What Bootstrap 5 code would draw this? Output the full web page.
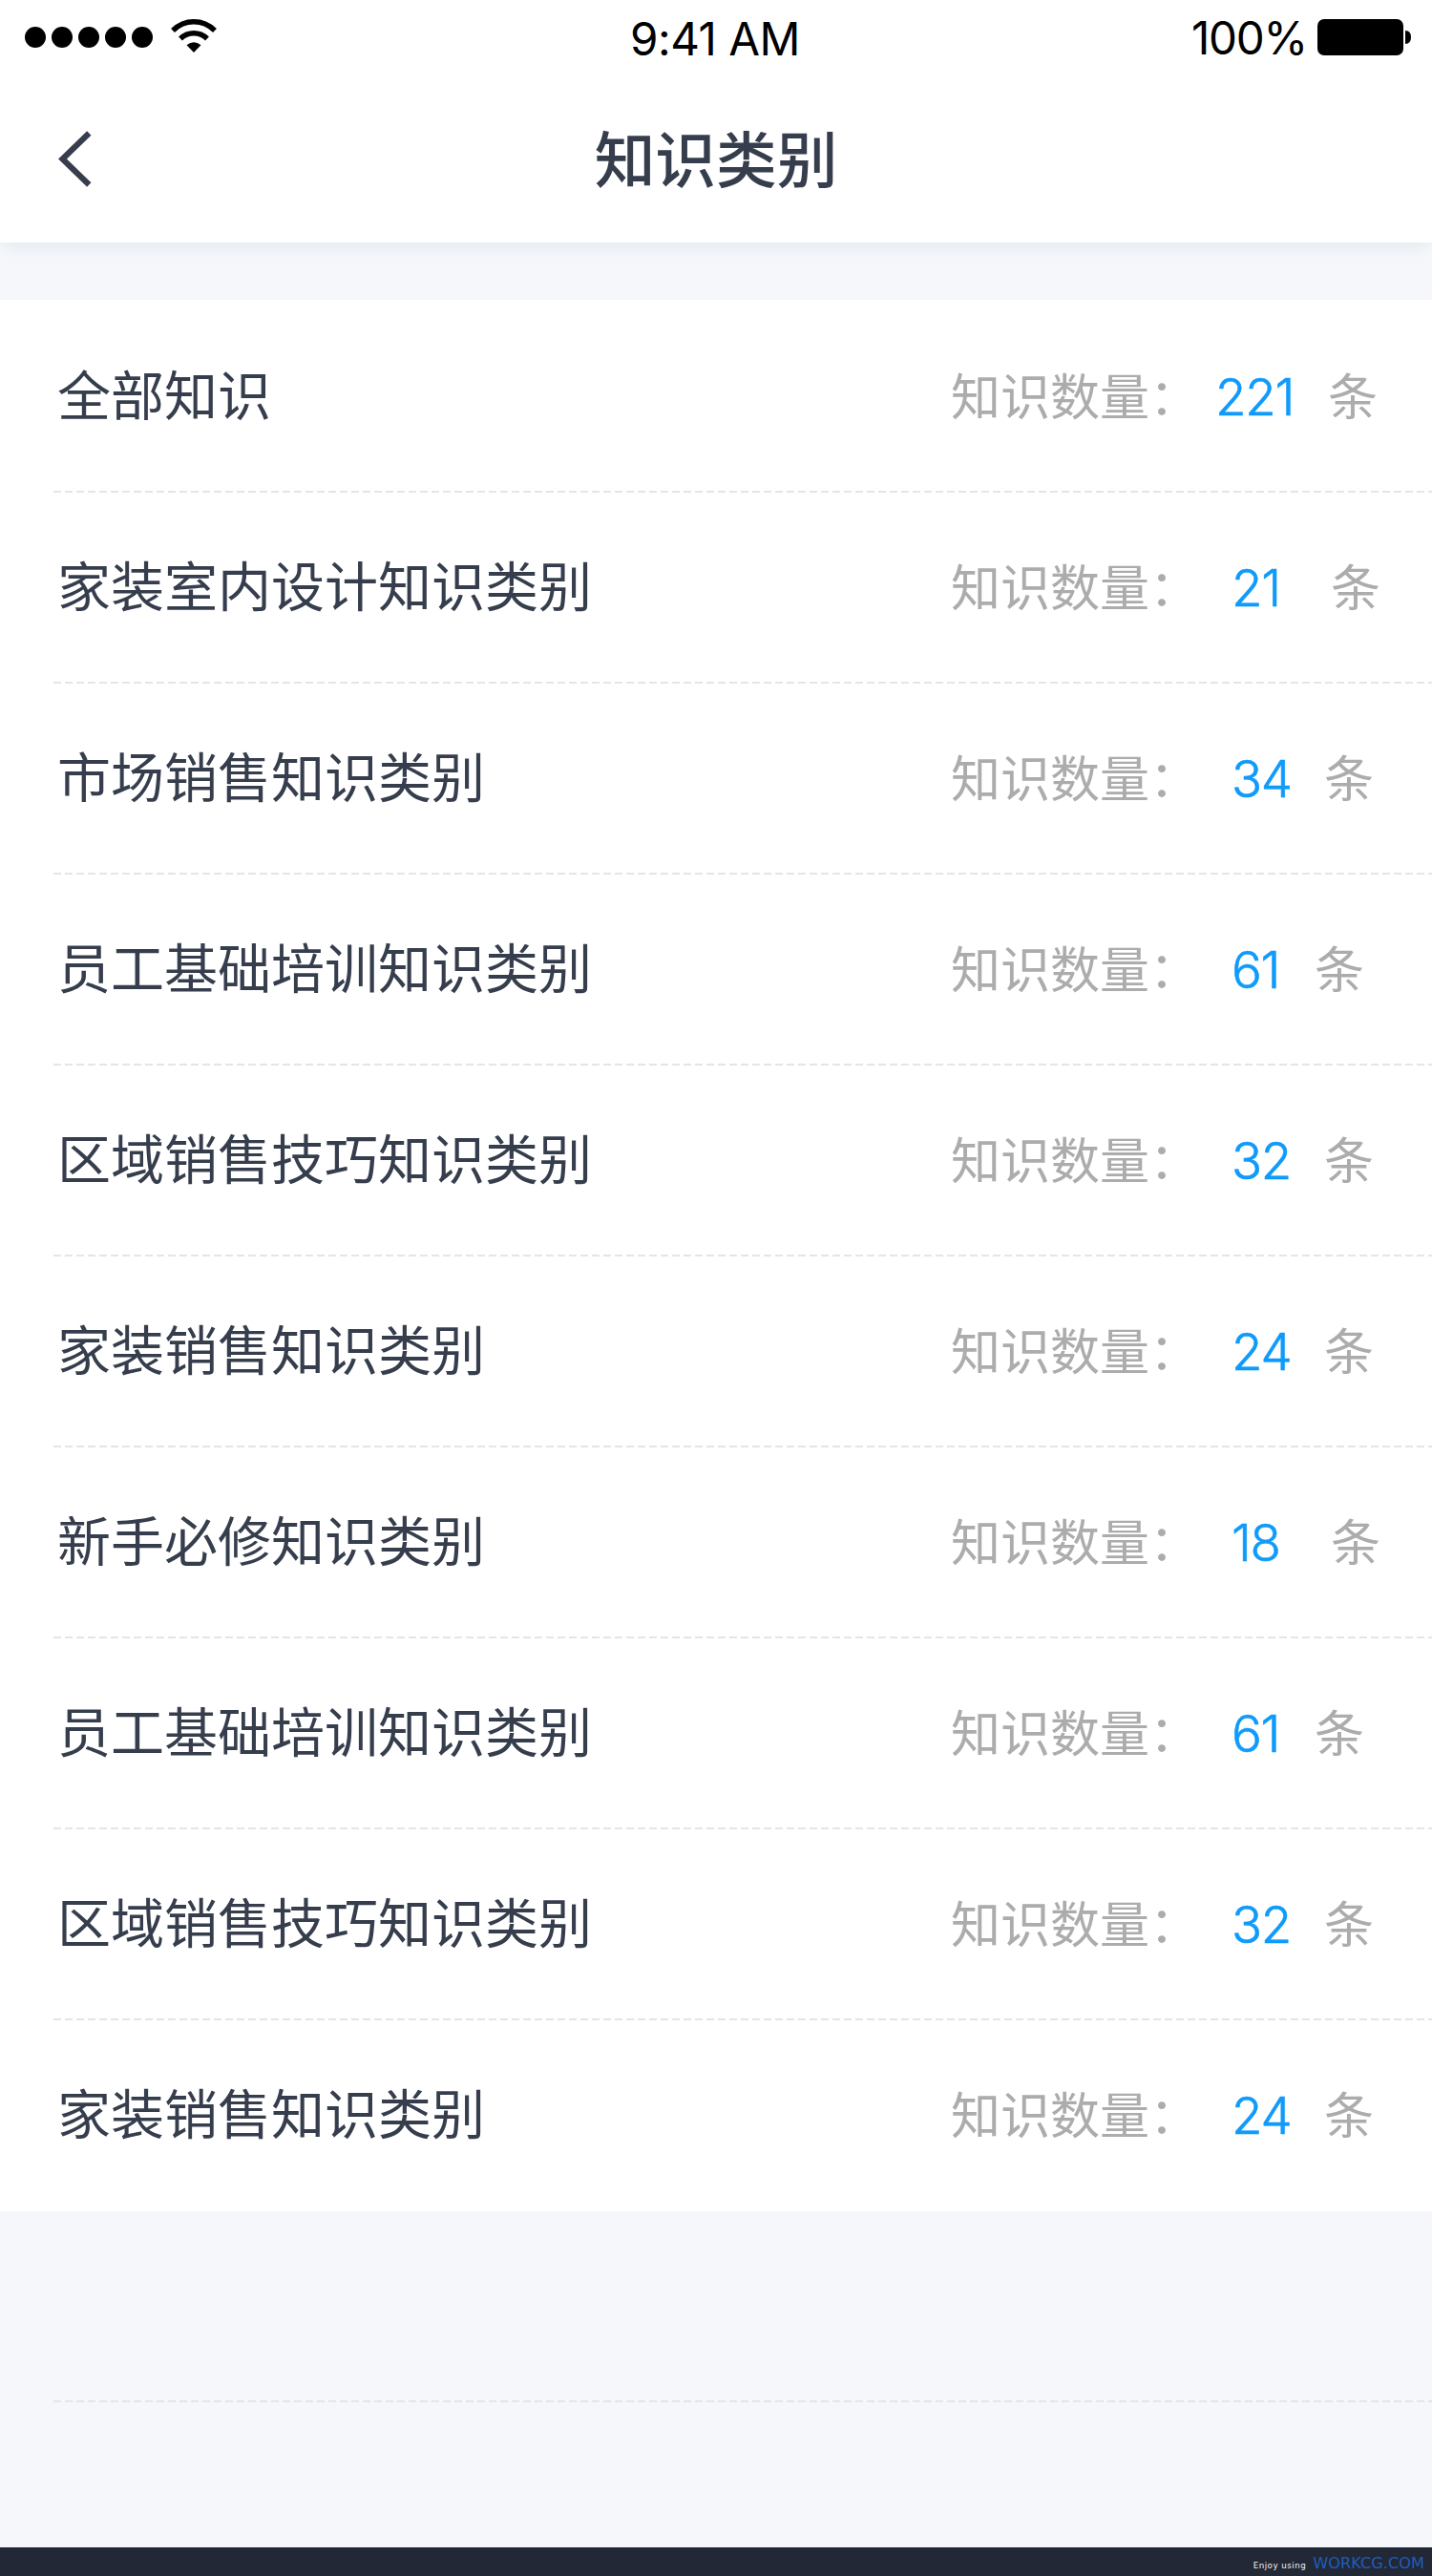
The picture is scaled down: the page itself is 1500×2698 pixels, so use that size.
<!DOCTYPE html>
<html lang="zh-CN">
<head>
<meta charset="utf-8">
<meta name="viewport" content="width=device-width, initial-scale=1">
<title>知识类别</title>
<link href="https://cdn.jsdelivr.net/npm/bootstrap@5.3.0/dist/css/bootstrap.min.css" rel="stylesheet">
<style>
  body { background: #f5f7fb; color: #363e4d; font-family: Inter, "Noto Sans CJK SC", sans-serif; }
  .screen { width: 1500px; height: 2698px; overflow: hidden; }
  .app-header { height: 254px; box-shadow: 0 8px 16px -4px rgba(160, 185, 195, .22); }
  .status-bar { height: 78px; color: #000; font-size: 47.5px; line-height: 78px; }
  .status-bar > div { flex: 1 1 0; }
  .clock { letter-spacing: -.5px; padding-top: 2px; padding-right: 2px; }
  .charge { letter-spacing: -1.2px; padding-right: 11px; padding-top: 1px; }
  .title-bar { height: 176px; }
  .title-bar > div { flex: 1 1 0; }
  .title-bar h1 { font: 500 63.7px/90px "Noto Sans CJK SC", sans-serif; padding-bottom: 7px; }
  .back-link { padding-left: 56px; }
  .category-list { margin-top: 60px; padding-top: 2px; }
  .category-row { height: 200px; margin-left: 56px; padding-left: 4px; }
  .dashed-line::after { content: ""; position: absolute; left: 0; right: 0; bottom: 0; height: 2px;
    background: repeating-linear-gradient(90deg, #e5e5e5 0 8px, transparent 8px 12px); }
  .category-name { font: 400 56px/80px "Noto Sans CJK SC", sans-serif; width: 936px; padding-bottom: 10px; }
  .count-label, .count-unit { font: 400 52px/76px "Noto Sans CJK SC", sans-serif; color: #acacac; padding-bottom: 6px; }
  .count-label { width: 294px; }
  .count-value { font-size: 53px; font-weight: 300; line-height: 76px; color: #109bfb; -webkit-text-stroke: .6px #109bfb; letter-spacing: -1.3px; width: 97px; }
  .count-value.wide { margin-left: -17px; width: 118px; }
  .count-value.roomy { width: 104px; }
  .count-value.tight { width: 87px; }
  .page-footer { height: 30px; background: #222835; font-family: "DejaVu Sans", sans-serif; padding-right: 8px; }
  .credit { font-size: 8.7px; line-height: 12px; color: #f4f5f7; letter-spacing: .5px; margin-right: 7px; padding-top: 8px; }
  .brand { font-size: 16.2px; line-height: 30px; color: #1f5cbc; padding-top: 3px; }
</style>
</head>
<body>
<main class="screen d-flex flex-column">
  <header class="app-header bg-white position-relative">
    <div class="status-bar d-flex">
      <div class="d-flex">
        <svg width="240" height="78" viewBox="0 0 240 78" aria-hidden="true">
          <circle cx="37" cy="39" r="11"/><circle cx="65" cy="39" r="11"/><circle cx="93" cy="39" r="11"/><circle cx="121" cy="39" r="11"/><circle cx="149" cy="39" r="11"/>
          <g fill="none" stroke="#000" stroke-width="5.6"><path d="M181 32Q190.500 22.800 203 22.800T225 32"/><path d="M189 40.500Q195 34.800 203 34.800T217 40.500"/></g>
          <path d="M195.500 47.300Q203 41 210.500 47.300L203 55Z"/>
        </svg>
      </div>
      <div class="clock text-center">9:41 AM</div>
      <div class="d-flex justify-content-end">
        <span class="charge">100%</span>
        <svg width="120" height="78" viewBox="0 0 120 78" aria-hidden="true"><rect y="20" width="90" height="38" rx="7"/><path d="M92 32Q98 32 98 39T92 46Z"/></svg>
      </div>
    </div>
    <div class="title-bar d-flex align-items-center">
      <div class="d-flex"><a href="#" class="back-link d-flex" aria-label="返回"><svg width="46" height="176" viewBox="56 78 46 176" aria-hidden="true"><path d="M93.300 139.500L65.500 166.500L93.300 193.500" fill="none" stroke="#363e4d" stroke-width="6.200"/></svg></a></div>
      <h1 class="m-0">知识类别</h1>
      <div></div>
    </div>
  </header>
  <section class="category-list bg-white">
    <div class="category-row dashed-line position-relative d-flex align-items-center"><span class="category-name">全部知识</span><span class="count-label">知识数量：</span><span class="count-value wide">221</span><span class="count-unit">条</span></div>
    <div class="category-row dashed-line position-relative d-flex align-items-center"><span class="category-name">家装室内设计知识类别</span><span class="count-label">知识数量：</span><span class="count-value roomy">21</span><span class="count-unit">条</span></div>
    <div class="category-row dashed-line position-relative d-flex align-items-center"><span class="category-name">市场销售知识类别</span><span class="count-label">知识数量：</span><span class="count-value">34</span><span class="count-unit">条</span></div>
    <div class="category-row dashed-line position-relative d-flex align-items-center"><span class="category-name">员工基础培训知识类别</span><span class="count-label">知识数量：</span><span class="count-value tight">61</span><span class="count-unit">条</span></div>
    <div class="category-row dashed-line position-relative d-flex align-items-center"><span class="category-name">区域销售技巧知识类别</span><span class="count-label">知识数量：</span><span class="count-value">32</span><span class="count-unit">条</span></div>
    <div class="category-row dashed-line position-relative d-flex align-items-center"><span class="category-name">家装销售知识类别</span><span class="count-label">知识数量：</span><span class="count-value">24</span><span class="count-unit">条</span></div>
    <div class="category-row dashed-line position-relative d-flex align-items-center"><span class="category-name">新手必修知识类别</span><span class="count-label">知识数量：</span><span class="count-value roomy">18</span><span class="count-unit">条</span></div>
    <div class="category-row dashed-line position-relative d-flex align-items-center"><span class="category-name">员工基础培训知识类别</span><span class="count-label">知识数量：</span><span class="count-value tight">61</span><span class="count-unit">条</span></div>
    <div class="category-row dashed-line position-relative d-flex align-items-center"><span class="category-name">区域销售技巧知识类别</span><span class="count-label">知识数量：</span><span class="count-value">32</span><span class="count-unit">条</span></div>
    <div class="category-row position-relative d-flex align-items-center"><span class="category-name">家装销售知识类别</span><span class="count-label">知识数量：</span><span class="count-value">24</span><span class="count-unit">条</span></div>
  </section>
  <div class="category-row dashed-line position-relative"></div>
  <footer class="page-footer mt-auto d-flex align-items-center justify-content-end"><span class="credit">Enjoy using</span><span class="brand">WORKCG.COM</span></footer>
</main>
<script src="https://cdn.jsdelivr.net/npm/bootstrap@5.3.0/dist/js/bootstrap.bundle.min.js"></script>
</body>
</html>
